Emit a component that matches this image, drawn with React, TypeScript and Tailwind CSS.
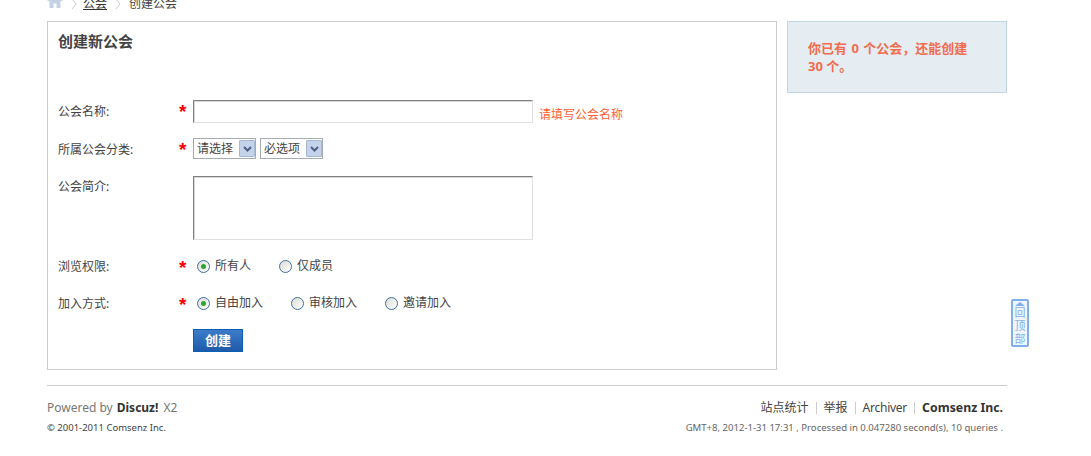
import React from 'react';

const FONT = "font-['Tahoma','Noto_Sans','Noto_Sans_CJK_SC',sans-serif]";

const Star = () => (
  <span className="ml-[1px] mt-[2px] text-[19px] leading-none font-bold text-[#f00] font-['Liberation_Sans',sans-serif]">*</span>
);

const Radio = ({ checked }: { checked?: boolean }) => (
  <span className="flex h-[13px] w-[13px] items-center justify-center rounded-full border border-[#3f6f9f] bg-gradient-to-br from-[#dcdcd6] to-white">
    {checked && <span className="h-[5px] w-[5px] rounded-full bg-[#2ea62e]" />}
  </span>
);

const Select = ({ label, width }: { label: string; width: string }) => (
  <div className={`flex h-[21px] items-center border border-[#a5acb2] bg-white pl-[3px] ${width}`}>
    <span className="flex-1 text-[12px] text-[#444]">{label}</span>
    <span className="flex h-[17px] w-[16px] items-center justify-center rounded-[1px] border border-[#a5b9d5] bg-[#c4d3ea]">
      <svg width="9" height="6" viewBox="0 0 9 6">
        <path d="M1 1l3.5 3.5L8 1" fill="none" stroke="#4d6185" strokeWidth="2" />
      </svg>
    </span>
  </div>
);

const Row = ({ label, star, children, className, labelClass }: { label: string; star?: boolean; children: React.ReactNode; className: string; labelClass: string }) => (
  <div className={`flex ${className}`}>
    <label className={`w-[120px] text-[12px] leading-[20px] text-[#444] ${labelClass}`}>{label}</label>
    <div className="flex w-[15px] items-start">{star && <Star />}</div>
    {children}
  </div>
);

const RadioOption = ({ label, checked, className }: { label: string; checked?: boolean; className: string }) => (
  <div className={`flex items-center gap-[5px] text-[12px] leading-[20px] text-[#444] ${className}`}>
    <Radio checked={checked} />
    <span>{label}</span>
  </div>
);

const Sep = () => <span className="mx-[7px] h-[12px] w-[1px] bg-[#ccc]" />;

export default function App() {
  return (
    <div className={`relative h-[456px] w-[1091px] overflow-hidden bg-white ${FONT}`}>
      <div className="ml-[47px] w-[960px]">
        <nav className="mb-[13px] flex h-[8px] items-center text-[12px] text-[#444]">
          <svg width="16" height="14" viewBox="0 0 16 14" className="mt-[-6px]">
            <path d="M8 0L0 7h2.5v7h4V9.5h3V14h4V7H16z" fill="#c3d3e3" />
          </svg>
          <svg width="6" height="10" viewBox="0 0 6 10" className="ml-[8px]">
            <path d="M1 0l4 5-4 5" fill="none" stroke="#ccc" />
          </svg>
          <a className="ml-[6px] text-[#333] underline">公会</a>
          <svg width="6" height="10" viewBox="0 0 6 10" className="ml-[8px]">
            <path d="M1 0l4 5-4 5" fill="none" stroke="#ccc" />
          </svg>
          <span className="ml-[8px]">创建公会</span>
        </nav>

        <div className="flex items-start gap-[10px]">
          <main className="h-[349px] w-[730px] border border-[#ccc] px-[10px] pt-[10px]">
            <h1 className="text-[15px] font-bold leading-[18px] text-[#444]">创建新公会</h1>

            <Row label="公会名称:" star labelClass="pt-[2px]" className="mt-[50px] h-[23px] items-start">
              <input readOnly className="h-[23px] w-[340px] border border-[#e0e0e0] border-t-[#808080] border-l-[#808080] bg-white shadow-[inset_1px_1px_0_#d8d8d8]" />
              <span className="ml-[6px] mt-[6px] text-[12px] leading-[18px] text-[#ff6033]">请填写公会名称</span>
            </Row>

            <Row label="所属公会分类:" star labelClass="pt-[2px]" className="mt-[15px] h-[21px]">
              <div className="flex gap-[4px]">
                <Select label="请选择" width="w-[63px]" />
                <Select label="必选项" width="w-[63px]" />
              </div>
            </Row>

            <Row label="公会简介:" labelClass="pt-[1px]" className="mt-[17px] h-[64px]">
              <textarea readOnly className="h-[64px] w-[340px] resize-none border border-[#e0e0e0] border-t-[#808080] border-l-[#808080] bg-white shadow-[inset_1px_1px_0_#d8d8d8]" />
            </Row>

            <Row label="浏览权限:" star labelClass="pt-[1px]" className="mt-[16px] h-[20px]">
              <div className="flex pl-[4px]">
                <RadioOption label="所有人" checked className="w-[82px]" />
                <RadioOption label="仅成员" className="" />
              </div>
            </Row>

            <Row label="加入方式:" star labelClass="pt-[1px]" className="mt-[17px] h-[20px]">
              <div className="flex pl-[4px]">
                <RadioOption label="自由加入" checked className="w-[94px]" />
                <RadioOption label="审核加入" className="w-[94px]" />
                <RadioOption label="邀请加入" className="" />
              </div>
            </Row>

            <div className="mt-[16px] pl-[135px]">
              <button className="flex h-[23px] w-[50px] items-center justify-center border border-[#0a5fb4] bg-gradient-to-b from-[#3d7cc9] to-[#1e5cab] text-[13px] font-bold text-white">
                创建
              </button>
            </div>
          </main>

          <aside className="h-[72px] w-[220px] border border-[#c2d5e3] bg-[#e5edf2] px-[20px] pt-[17px] text-[13px] font-bold leading-[18px] text-[#f26c4f]">
            你已有 <span className="mx-[1px]">0</span> 个公会，还能创建
            <br />
            30 个。
          </aside>
        </div>

        <footer className="mt-[15px] flex justify-between border-t border-[#cdcdcd] pt-[13px]">
          <div>
            <p className="flex text-[12px] leading-[17px] text-[#777]">
              <span>Powered by</span>
              <strong className="ml-[4px] text-[#333]">Discuz!</strong>
              <span className="ml-[5px]">X2</span>
            </p>
            <p className="mt-[5px] text-[9.5px] leading-[14px] text-[#444]">© 2001-2011 Comsenz Inc.</p>
          </div>
          <div className="pr-[4px] text-right">
            <p className="flex items-center justify-end text-[12px] leading-[17px] text-[#444]">
              <span>站点统计</span>
              <Sep />
              <span>举报</span>
              <Sep />
              <span className="tracking-[-0.25px]">Archiver</span>
              <Sep />
              <strong className="text-[12.3px] text-[#333]">Comsenz Inc.</strong>
            </p>
            <p className="mt-[5px] text-[9.56px] leading-[14px] text-[#666]">GMT+8, 2012-1-31 17:31 , Processed in 0.047280 second(s), 10 queries .</p>
          </div>
        </footer>
      </div>

      <a className="absolute left-[1011px] top-[299px] flex h-[48px] w-[18px] flex-col items-center rounded-[2px] border-2 border-[#7fb0e8] bg-[#f2f6fc] text-[11px] leading-[13px] text-[#7fb0e8]">
        <span className="mt-[1px] h-0 w-0 border-x-[5px] border-b-[4px] border-x-transparent border-b-[#7fb0e8]" />
        <span>回</span>
        <span>顶</span>
        <span>部</span>
      </a>
    </div>
  );
}
